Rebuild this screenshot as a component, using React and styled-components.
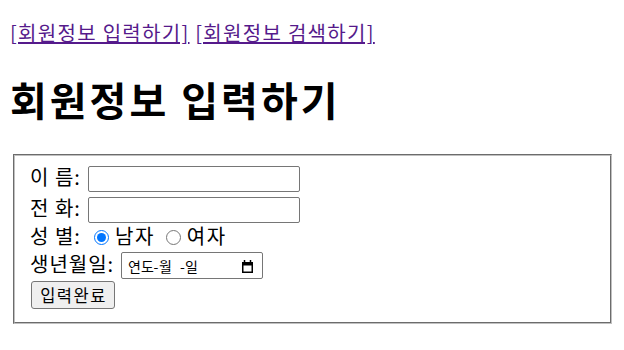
import React from 'react';
import styled, {createGlobalStyle} from "styled-components";

const GlobalStyle = createGlobalStyle`
body {
    margin: 0;
    background: #fff;
    color: #000;
    font-family: "Noto Sans CJK KR", "Noto Sans", sans-serif;
}
`;

const Page = styled.div`
display: flex;
flex-direction: column;
padding: 20px 10px 0 10px;
`;

const LinkLine = styled.div`
font-size: 20px;
line-height: 26px;
height: 26px;
white-space: nowrap;
letter-spacing: 1.3px;
`;

const NavLink = styled.a`
color: #551A8B;
text-decoration: underline;
cursor: pointer;
`;

const Title = styled.h1`
margin: 27px 0 28px 0;
font-size: 40px;
line-height: 53px;
font-weight: bold;
letter-spacing: 3px;
white-space: nowrap;
`;

const FieldSet = styled.fieldset`
margin: 0 2px 0 3px;
padding: 7px 15px 13px 15px;
border: 2px groove #c0c0c0;
display: flex;
flex-direction: column;
min-width: 0;
`;

const Row = styled.div`
display: flex;
align-items: center;
height: ${props => props.h}px;
font-size: 20px;
line-height: 26px;
letter-spacing: 1.5px;
`;

const Label = styled.span`
width: ${props => props.w}px;
flex-shrink: 0;
padding-bottom: 4px;
white-space: nowrap;
letter-spacing: 1px;
`;

const TextInput = styled.input`
box-sizing: border-box;
width: 212px;
height: 26px;
margin: 0;
padding: 1px 3px;
border: 1px solid #767676;
border-radius: 2px;
font-size: 16px;
font-family: inherit;
background: #fff;
`;

const Radio = styled.input`
width: 15px;
height: 15px;
margin: 0 6px 0 ${props => props.gap}px;
flex-shrink: 0;
`;

const RadioText = styled.span`
padding-bottom: 3px;
`;

const DateBox = styled.div`
box-sizing: border-box;
width: 142px;
height: 27px;
border: 1px solid #767676;
border-radius: 2px;
display: flex;
align-items: center;
padding: 0 9px 0 6px;
font-size: 14px;
line-height: 18px;
letter-spacing: 0;
`;

const DateField = styled.span`
width: ${props => props.w}px;
flex-shrink: 0;
white-space: nowrap;
`;

const DateSep = styled.span`
width: ${props => props.w}px;
flex-shrink: 0;
text-align: center;
`;

const CalIcon = styled.svg`
margin-left: auto;
margin-top: 1px;
flex-shrink: 0;
`;

const SubmitButton = styled.button`
box-sizing: border-box;
width: 84px;
height: 28px;
margin: 0 0 0 1px;
padding: 0 0 0 1px;
background: #efefef;
border: 1px solid #767676;
border-radius: 3px;
font-family: inherit;
font-size: 16.5px;
line-height: 20px;
letter-spacing: 1.5px;
color: #000;
`;

function App() {
    return (
        <Page>
            <GlobalStyle/>
            <LinkLine>
                <NavLink>[회원정보 입력하기]</NavLink> <NavLink>[회원정보 검색하기]</NavLink>
            </LinkLine>
            <Title>회원정보 입력하기</Title>
            <form onSubmit={e => e.preventDefault()}>
                <FieldSet>
                    <Row h={31}>
                        <Label w={58}>이 름:</Label>
                        <TextInput type="text"/>
                    </Row>
                    <Row h={31}>
                        <Label w={58}>전 화:</Label>
                        <TextInput type="text"/>
                    </Row>
                    <Row h={25}>
                        <Label w={64}>성 별:</Label>
                        <Radio type="radio" name="gender" gap={0} defaultChecked/>
                        <RadioText>남자</RadioText>
                        <Radio type="radio" name="gender" gap={11}/>
                        <RadioText>여자</RadioText>
                    </Row>
                    <Row h={31}>
                        <Label w={91}>생년월일:</Label>
                        <DateBox>
                            <DateField w={25}>연도</DateField>
                            <DateSep w={6}>-</DateSep>
                            <DateField w={21}>월</DateField>
                            <DateSep w={5}>-</DateSep>
                            <DateField w={13}>일</DateField>
                            <CalIcon width="11" height="13" viewBox="0 0 11 13">
                                <path d="M2.5 0v2.5M8.5 0v2.5" stroke="#000" strokeWidth="1.5"/>
                                <rect x="0.75" y="2.75" width="9.5" height="9.5" fill="none" stroke="#000" strokeWidth="1.5"/>
                                <rect x="0" y="2" width="11" height="3.5" fill="#000"/>
                            </CalIcon>
                        </DateBox>
                    </Row>
                    <Row h={28}>
                        <SubmitButton type="submit">입력완료</SubmitButton>
                    </Row>
                </FieldSet>
            </form>
        </Page>
    );
}

export default App;
